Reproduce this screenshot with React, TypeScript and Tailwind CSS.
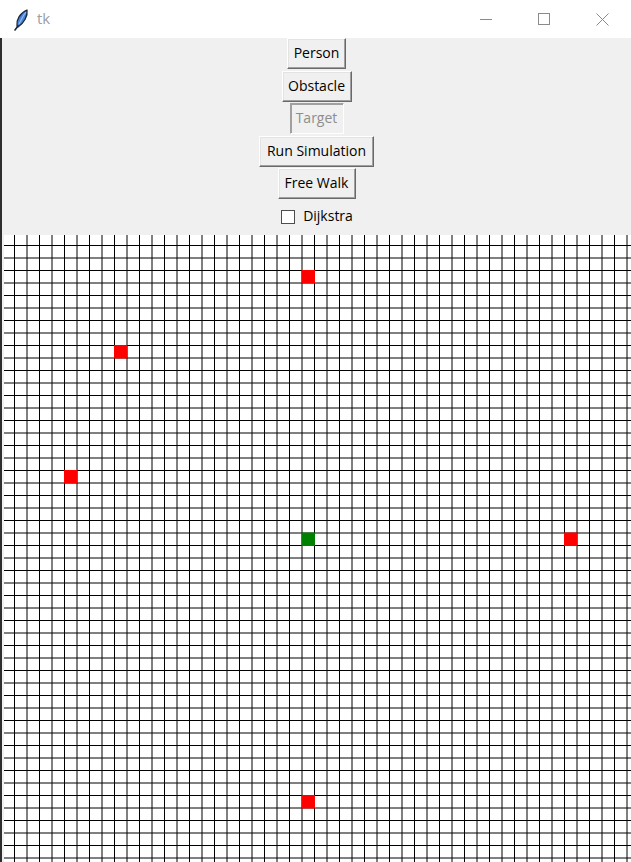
// -----------------------------------------------------------
// Tk window — grid simulation with control buttons
// -----------------------------------------------------------

const CELL = 12.5;
const COUNT = 50;

type Cell = { col: number; row: number; color: string };

const CELLS: Cell[] = [
  { col: 24, row: 3, color: "#ff0000" },
  { col: 9, row: 9, color: "#ff0000" },
  { col: 5, row: 19, color: "#ff0000" },
  { col: 24, row: 24, color: "#008000" },
  { col: 45, row: 24, color: "#ff0000" },
  { col: 24, row: 45, color: "#ff0000" },
];

const font = { fontFamily: '"Open Sans", "Liberation Sans", sans-serif' };

const Feather = () => (
  <svg width="16" height="22" viewBox="0 0 16 22">
    {/* leaf */}
    <path
      d="M4 17 C3 11 7 4 14 1 C15 7 11 14 5 18 Z"
      fill="#4a86d8"
      stroke="#1b2540"
      strokeWidth="1.3"
      strokeLinejoin="round"
    />
    <path d="M6 15 C8 11 10 7 13 3" stroke="#a9c8f0" strokeWidth="0.9" fill="none" />
    {/* quill */}
    <path d="M5 17 L2 21" stroke="#1b2540" strokeWidth="1.6" strokeLinecap="round" />
  </svg>
);

const TitleBar = () => (
  <div className="h-[38px] bg-white flex items-center shrink-0">
    <div className="pl-[13px] pt-[1px] w-[37px]">
      <Feather />
    </div>
    <span className="text-[15px] text-[#9aa0a6] leading-none pb-[1px]" style={font}>
      tk
    </span>
    <div className="flex-1" />
    {/* Window controls */}
    <div className="flex h-full">
      <div className="w-[58px] flex items-center justify-center">
        <div className="w-[12px] h-px bg-[#8a8a8a]" />
      </div>
      <div className="w-[58px] flex items-center justify-center">
        <div className="w-[12px] h-[12px] border border-[#8a8a8a]" />
      </div>
      <div className="w-[58px] flex items-center justify-center">
        <svg width="13" height="13" viewBox="0 0 13 13">
          <path d="M0.5 0.5 L12.5 12.5 M12.5 0.5 L0.5 12.5" stroke="#8a8a8a" strokeWidth="1" />
        </svg>
      </div>
    </div>
  </div>
);

const TkButton = ({
  label,
  width,
  disabled = false,
}: {
  label: string;
  width: string;
  disabled?: boolean;
}) => (
  <div
    className={`h-[31px] ${width} flex items-center justify-center bg-[#f0f0f0] text-[14px] leading-none border ${
      disabled
        ? "border-t-[#a0a0a0] border-l-[#a0a0a0] border-r-white border-b-white text-[#8d8d8d] shadow-[inset_1px_1px_0_#a0a0a0]"
        : "border-t-white border-l-white border-r-[#696969] border-b-[#696969] text-black shadow-[inset_-1px_-1px_0_#a0a0a0,inset_1px_1px_0_#e3e3e3]"
    }`}
    style={font}
  >
    <span className="pb-[1px]">{label}</span>
  </div>
);

const Controls = () => (
  <div className="h-[195px] bg-[#f0f0f0] flex flex-col items-center gap-[1.5px] shrink-0">
    <TkButton label="Person" width="w-[59px]" />
    <TkButton label="Obstacle" width="w-[70px]" />
    <TkButton label="Target" width="w-[54px]" disabled />
    <TkButton label="Run Simulation" width="w-[115px]" />
    <TkButton label="Free Walk" width="w-[78px]" />
    {/* Checkbox row */}
    <div className="h-[32px] flex items-center gap-[8px] pl-[1px]" style={font}>
      <div className="w-[14px] h-[14px] bg-white border border-[#4d4d4d]" />
      <span className="text-[14px] text-black leading-none pb-[1px]">Dijkstra</span>
    </div>
  </div>
);

const GridCanvas = () => {
  const size = 629;
  const lines = Array.from({ length: COUNT }, (_, i) => (i + 1) * CELL);
  return (
    <div className="h-[629px] bg-[#f0f0f0] shrink-0">
      <svg width={size} height={size} className="block">
        <rect x="2" y="2" width={size - 2} height={size - 2} fill="#ffffff" />
        {lines.map((p) => (
          <line key={`h${p}`} x1="2" y1={p} x2={size} y2={p} stroke="#000" strokeWidth="1" />
        ))}
        {lines.map((p) => (
          <line key={`v${p}`} x1={p} y1="2" x2={p} y2={size} stroke="#000" strokeWidth="1" />
        ))}
        {CELLS.map((c) => (
          <rect
            key={`${c.col}-${c.row}`}
            x={c.col * CELL}
            y={c.row * CELL}
            width={CELL}
            height={CELL}
            fill={c.color}
            stroke={c.color}
            strokeWidth="1"
          />
        ))}
      </svg>
    </div>
  );
};

const App = () => (
  <div className="w-[631px] h-[862px] overflow-hidden bg-white flex flex-col">
    <TitleBar />
    <div className="flex flex-1">
      {/* desktop edge */}
      <div className="w-[2px] bg-[#2e2e2e] shrink-0" />
      <div className="flex-1 flex flex-col">
        <Controls />
        <GridCanvas />
      </div>
    </div>
  </div>
);

export default App;
